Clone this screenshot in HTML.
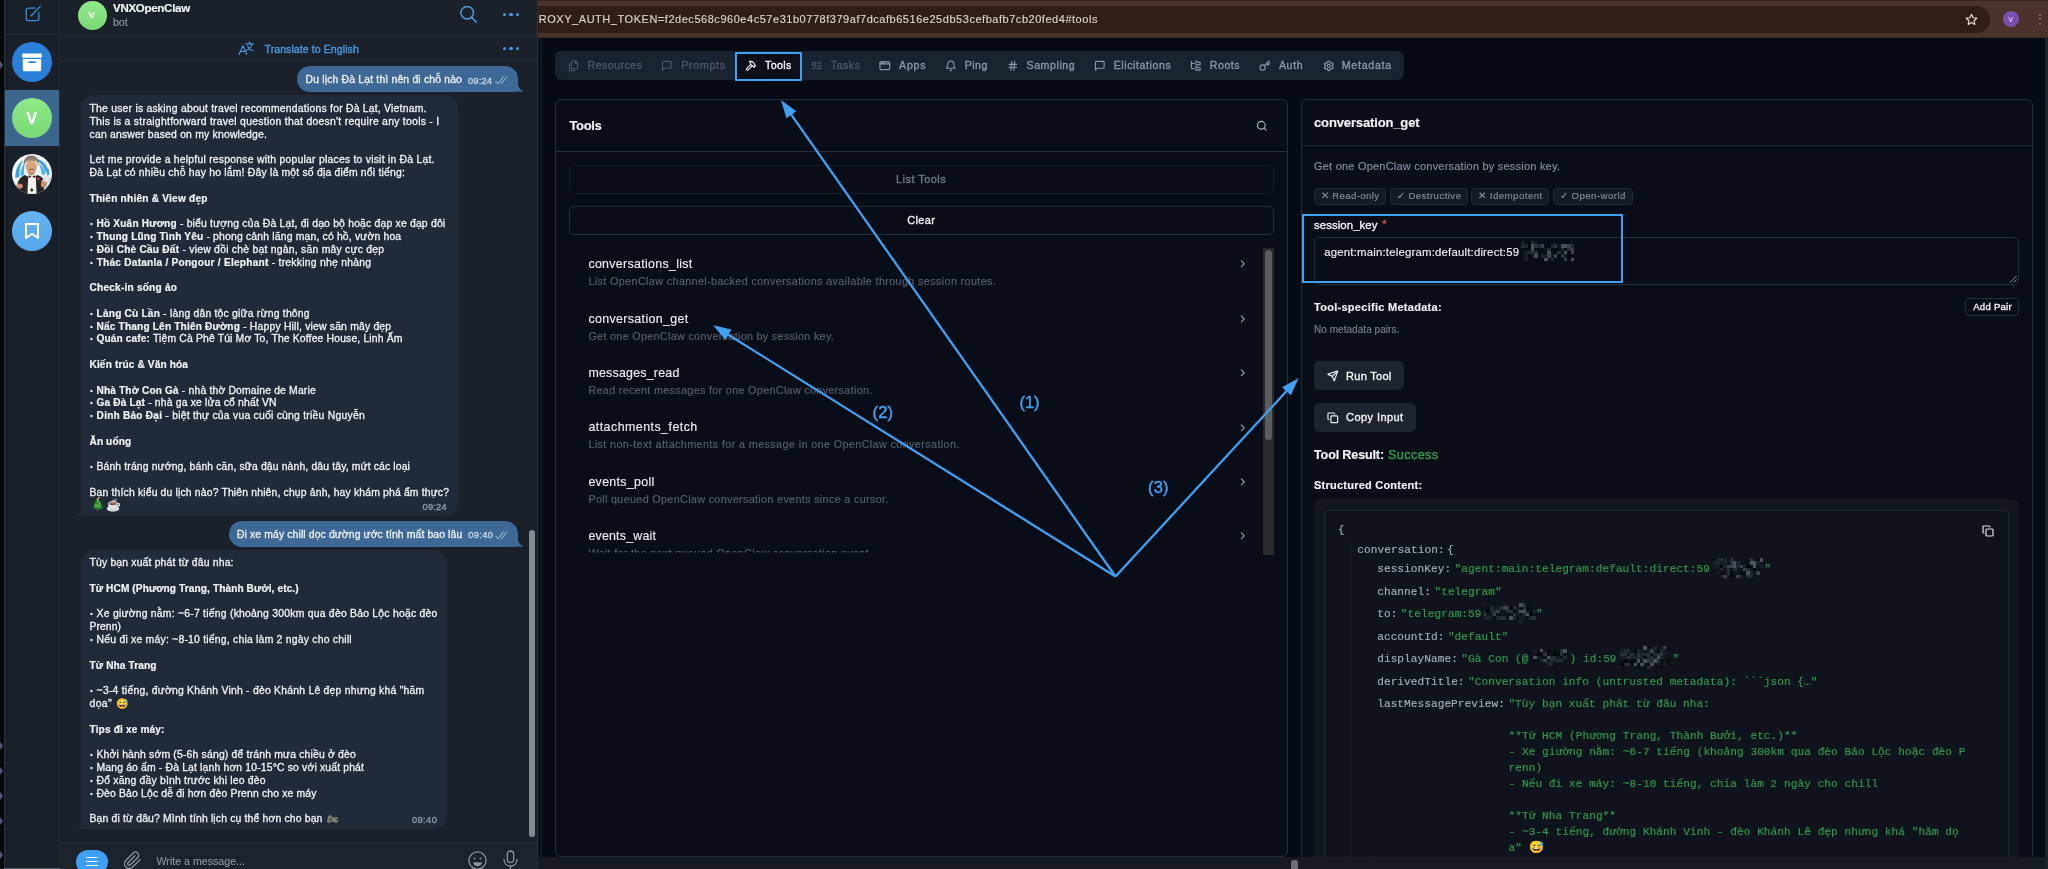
<!DOCTYPE html>
<html lang="vi"><head><meta charset="utf-8"><title>MCP Inspector</title>
<style>
html,body{margin:0;padding:0;background:#050a15;}
body{will-change:transform;width:2048px;height:869px;overflow:hidden;position:relative;font-family:'Liberation Sans',sans-serif;}
.a{position:absolute;box-sizing:border-box;}
.t{position:absolute;white-space:pre;-webkit-text-stroke:0.15px;}
svg{position:absolute;overflow:visible;}
b{font-weight:700;-webkit-text-stroke:0.2px;font-size:0.972em;}
.bl{font-style:normal;font-size:0.66em;vertical-align:0.16em;margin:0 0.1em 0 0.1em;}
</style></head>
<body>
<div class="a" style="left:0px;top:0px;width:538px;height:869px;background:#1a212b;"></div>
<div class="a" style="left:0px;top:0px;width:4px;height:869px;background:#07080a;"></div>
<div class="a" style="left:4px;top:0px;width:55px;height:869px;background:#19202a;"></div>
<div class="a" style="left:59px;top:0px;width:1px;height:869px;background:#222a35;"></div>
<div class="a" style="left:60px;top:33.5px;width:478px;height:1px;background:#222933;"></div>
<div class="a" style="left:4px;top:33.5px;width:55px;height:1px;background:#212934;"></div>
<div class="a" style="left:60px;top:61px;width:478px;height:1px;background:#222933;"></div>
<div class="a" style="left:4px;top:90px;width:55px;height:56px;background:#3d668f;"></div>
<svg style="left:24px;top:5px" width="18" height="18" viewBox="0 0 18 18" fill="none" stroke="#3d8bd8" stroke-width="1.3" stroke-linecap="round" stroke-linejoin="round"><path d="M11 3.2H4.2a2 2 0 0 0-2 2v8.4a2 2 0 0 0 2 2h8.6a2 2 0 0 0 2-2V7.4"/><path d="M16.3 1.4L7.2 10.8"/></svg>
<div class="a" style="left:12px;top:42px;width:40px;height:40px;border-radius:50%;background:#2a7fd8"></div>
<svg style="left:22px;top:52px" width="20" height="20" viewBox="0 0 20 20"><path d="M1.2 1.6h17.6a1 1 0 0 1 1 1v3.1H.2V2.6a1 1 0 0 1 1-1z" fill="#fff"/><path d="M.8 6.9h18.4v11a1.4 1.4 0 0 1-1.4 1.4H2.2A1.400 1.400 0 0 1 .8 17.900z" fill="#fff"/><rect x="6.400" y="9.200" width="7.200" height="1.900" rx=".6" fill="#2a7fd8"/></svg>
<div class="a" style="left:12px;top:98px;width:40px;height:40px;border-radius:50%;background:linear-gradient(180deg,#8fe98a,#77d873)"></div>
<svg style="left:12px;top:154px" width="40" height="40" viewBox="0 0 40 40"><defs><clipPath id="pc"><circle cx="20" cy="20" r="20"/></clipPath></defs><g clip-path="url(#pc)"><rect width="40" height="40" fill="#f1f6fa"/><path d="M3.500 24C3 16 6 9.500 11 6.500 8 12 7 18 7.500 23z" fill="#3ba3e0"/><path d="M8.500 22c0-6 2-11 5-14-1.500 5-2 9-1.500 13z" fill="#4db0ea"/><path d="M25 5c5 1 9.500 5 11.500 12l-3 1.500C32 13 29 9 25 7z" fill="#3ba3e0"/><path d="M27 10c3 2 5.500 5.500 6.500 10l-3.500 1c-.500-4-1.500-7.500-3-11z" fill="#4db0ea"/><path d="M36 14c1 2 1.500 4.500 1.500 7l-2.500.500c0-2.500-.300-4.500-1-6.500z" fill="#3ba3e0"/><path d="M11.800 12C11 5.500 14.500 1.500 19.500 1.500S27.500 5 26.600 12.500c-.600-3-1.600-5-2.600-6-2 1-6 1.200-9.500.500-1.200 1.500-2.200 3-2.700 5z" fill="#857a70"/><ellipse cx="19.300" cy="12.600" rx="5.600" ry="7" fill="#d9a680"/><path d="M14 8c2-1.500 8-1.800 10.600-.300L24 5.500h-9.500z" fill="#9a8f84"/><path d="M15.500 16.500c1.500 3 6 3 7.600 0-.400 3.500-1.800 5-3.800 5s-3.400-1.500-3.800-5z" fill="#b88a6a"/><path d="M16.800 14.800h5v1.200h-5z" fill="#8a6a55"/><path d="M4 40c.500-11 3-17 9-19l6.500 4 6-4c5 1.500 7 5 8 9l-3 10z" fill="#2a2322"/><path d="M16.200 22.500h7.600l.800 17.500h-9.200z" fill="#f4f2ef"/><path d="M16.500 21.200l3.300 1.800 3.300-1.800v2.800l-3.300-1.500-3.300 1.500z" fill="#1d1a1a"/><circle cx="26.500" cy="24.800" r="1.400" fill="#c8325e"/><path d="M29 27.500l5.500-5.800 5.500 1.800-5 7.500z" fill="#cfcfcf"/><path d="M31.500 26l4-4 3 1-3.500 5z" fill="#e6e6e6"/><circle cx="31.800" cy="30.500" r="3" fill="#c9906e"/><ellipse cx="7.600" cy="32" rx="3.200" ry="2.600" fill="#c9906e"/><path d="M19.800 33.500l1.800 3.500h-3.600z" fill="#2a2a2a"/><rect x="19.300" y="36" width="1" height="1.800" fill="#2a2a2a"/></g></svg>
<div class="a" style="left:12px;top:210.500px;width:40px;height:40px;border-radius:50%;background:linear-gradient(180deg,#66b4f3,#57a5ea)"></div>
<svg style="left:24px;top:222px" width="16" height="18" viewBox="0 0 16 18" fill="none" stroke="#fff" stroke-width="2" stroke-linejoin="round"><path d="M2 2h12v14l-6-4.200L2 16z"/></svg>
<div class="a" style="left:77.500px;top:0.500px;width:29px;height:29px;border-radius:50%;background:linear-gradient(180deg,#92ea8d,#78d974)"></div>
<svg style="left:458px;top:4px" width="22" height="22" viewBox="0 0 22 22" fill="none" stroke="#4a9ae2" stroke-width="1.500" stroke-linecap="round"><circle cx="9.200" cy="8.700" r="6.300"/><path d="M13.800 13.400L18.300 18.300"/></svg>
<div class="a" style="left:502.7px;top:12.5px;width:3.600px;height:3.600px;border-radius:50%;background:#4a9ae2"></div>
<div class="a" style="left:509.2px;top:12.5px;width:3.600px;height:3.600px;border-radius:50%;background:#4a9ae2"></div>
<div class="a" style="left:515.7px;top:12.5px;width:3.600px;height:3.600px;border-radius:50%;background:#4a9ae2"></div>
<div class="a" style="left:502.7px;top:46.900000000000006px;width:3.600px;height:3.600px;border-radius:50%;background:#4a9ae2"></div>
<div class="a" style="left:509.2px;top:46.900000000000006px;width:3.600px;height:3.600px;border-radius:50%;background:#4a9ae2"></div>
<div class="a" style="left:515.7px;top:46.900000000000006px;width:3.600px;height:3.600px;border-radius:50%;background:#4a9ae2"></div>
<svg style="left:237.500px;top:40.800px" width="16.200" height="14.400" viewBox="0 0 18 16" fill="none" stroke="#4a9ae2" stroke-width="1.200" stroke-linecap="round" stroke-linejoin="round"><path d="M1 15L5.600 5.200 9.800 15M2.600 11.600h5.800"/><path d="M8.600 3.200h8.400M12.600 1v2.200M15.400 3.400c-.8 3.400-3 5.800-6 7M10.600 5.600c1 2.400 3.200 4.400 6.200 5.200"/></svg>
<div class="a" style="left:296.500px;top:66px;width:221px;height:26px;border-radius:13px 13px 4px 13px;background:#3e6896"></div>
<svg style="left:511px;top:82px" width="13" height="10" viewBox="0 0 13 10"><path d="M0 0h6.500c0 4 2 7.500 6 9.400-3 .8-7 .6-9.500-1.200L0 10z" fill="#3e6896"/></svg>
<div class="a" style="left:81px;top:95px;width:377px;height:421.300px;border-radius:13px 13px 13px 4px;background:#202a39"></div>
<svg style="left:75px;top:506.300px" width="13" height="10" viewBox="0 0 13 10"><path d="M13 0H6.500c0 4-2 7.500-6 9.400 3 .8 7 .6 9.500-1.200L13 10z" fill="#202a39"/></svg>
<div class="a" style="left:228.500px;top:521px;width:289px;height:25.500px;border-radius:13px 13px 4px 13px;background:#3e6896"></div>
<svg style="left:511px;top:536.500px" width="13" height="10" viewBox="0 0 13 10"><path d="M0 0h6.500c0 4 2 7.500 6 9.400-3 .8-7 .6-9.500-1.200L0 10z" fill="#3e6896"/></svg>
<div class="a" style="left:81px;top:549.500px;width:365.500px;height:279.500px;border-radius:13px 13px 13px 4px;background:#202a39"></div>
<svg style="left:75px;top:819px" width="13" height="10" viewBox="0 0 13 10"><path d="M13 0H6.500c0 4-2 7.500-6 9.400 3 .8 7 .6 9.500-1.200L13 10z" fill="#202a39"/></svg>
<svg style="left:494.500px;top:76.0px" width="14" height="9" viewBox="0 0 14 9" fill="none" stroke="#b4cde8" stroke-width="1" stroke-linecap="round" stroke-linejoin="round"><path d="M.8 5.200l2.200 2.600L8.400.9M6.200 7.800L11.800.9"/></svg>
<svg style="left:494.500px;top:530.5px" width="14" height="9" viewBox="0 0 14 9" fill="none" stroke="#b4cde8" stroke-width="1" stroke-linecap="round" stroke-linejoin="round"><path d="M.8 5.200l2.200 2.600L8.400.9M6.200 7.800L11.800.9"/></svg>
<div class="a" style="left:4px;top:868px;width:533px;height:1px;background:#5a6068;"></div>
<div class="a" style="left:4px;top:0px;width:0.8px;height:868px;background:#2a313b;"></div>
<svg style="left:0;top:61px" width="4" height="8" viewBox="0 0 4 8"><path d="M0 0L3.200 4L0 8z" fill="#55557a"/></svg>
<svg style="left:0;top:742px" width="4" height="8" viewBox="0 0 4 8"><path d="M0 0L3.200 4L0 8z" fill="#55557a"/></svg>
<svg style="left:0;top:767px" width="4" height="8" viewBox="0 0 4 8"><path d="M0 0L3.200 4L0 8z" fill="#55557a"/></svg>
<svg style="left:0;top:792px" width="4" height="8" viewBox="0 0 4 8"><path d="M0 0L3.200 4L0 8z" fill="#55557a"/></svg>
<svg style="left:0;top:817px" width="4" height="8" viewBox="0 0 4 8"><path d="M0 0L3.200 4L0 8z" fill="#55557a"/></svg>
<svg style="left:0;top:851px" width="4" height="8" viewBox="0 0 4 8"><path d="M0 0L3.200 4L0 8z" fill="#55557a"/></svg>
<div class="a" style="left:529px;top:530px;width:6px;height:307px;background:#848a91;border-radius:3px;"></div>
<div class="a" style="left:60px;top:841.5px;width:478px;height:1px;background:#262e39;"></div>
<div class="a" style="left:60px;top:842.5px;width:478px;height:27px;background:#1b222c;"></div>
<div class="a" style="left:76px;top:849.500px;width:32px;height:24px;border-radius:12px;background:#3ea0f4"></div>
<div class="a" style="left:86px;top:856.5px;width:12px;height:1.6px;background:#fff;border-radius:0.8px;"></div>
<div class="a" style="left:86px;top:860.5px;width:12px;height:1.6px;background:#fff;border-radius:0.8px;"></div>
<div class="a" style="left:86px;top:864.5px;width:12px;height:1.6px;background:#fff;border-radius:0.8px;"></div>
<svg style="left:123px;top:851px" width="19" height="19" viewBox="0 0 24 24" fill="none" stroke="#8b939d" stroke-width="1.700" stroke-linecap="round" stroke-linejoin="round"><path d="M21.400 11.050l-9.190 9.190a6 6 0 0 1-8.490-8.490l9.190-9.190a4 4 0 0 1 5.660 5.660l-9.200 9.190a2 2 0 0 1-2.830-2.830l8.490-8.480"/></svg>
<svg style="left:468px;top:851px" width="19" height="19" viewBox="0 0 19 19" fill="none" stroke="#8b939d" stroke-width="1.300"><circle cx="9.500" cy="9.500" r="8.600"/><circle cx="6.500" cy="7.600" r="1" fill="#8b939d" stroke="none"/><circle cx="12.500" cy="7.600" r="1" fill="#8b939d" stroke="none"/><path d="M5 11.200h9c-.4 2.600-2.200 4-4.500 4s-4.100-1.400-4.500-4z" fill="#8b939d" stroke="none"/></svg>
<svg style="left:502px;top:850px" width="17" height="20" viewBox="0 0 17 20" fill="none" stroke="#8b939d" stroke-width="1.300" stroke-linecap="round"><rect x="5.300" y="1" width="6.400" height="11.500" rx="3.200"/><path d="M2 9.500c0 4 2.800 6.500 6.500 6.500s6.500-2.500 6.500-6.500M8.500 16v4"/></svg>
<span class="t" style="left:113px;top:0px;line-height:17px;font-size:11.5px;color:#f4f6f8;font-weight:700;letter-spacing:-0.275px;">VNXOpenClaw</span>
<span class="t" style="left:113px;top:14px;line-height:16px;font-size:10.5px;color:#8d98a4;">bot</span>
<span class="t" style="left:88.3px;top:8px;line-height:14px;font-size:9.5px;color:#fff;font-weight:700;">V</span>
<span class="t" style="left:26.3px;top:107px;line-height:23px;font-size:16.5px;color:#fff;font-weight:700;">V</span>
<span class="t" style="left:264.5px;top:41px;line-height:16px;font-size:10.6px;color:#4a9ae2;-webkit-text-stroke:0.35px;letter-spacing:0.055px;">Translate to English</span>
<span class="t" style="left:305.6px;top:72px;line-height:16px;font-size:10.4px;color:#f1f3f5;letter-spacing:0.173px;-webkit-text-stroke:0.3px #f1f3f5;">Du lịch Đà Lạt thì nên đi chỗ nào</span>
<span class="t" style="left:468px;top:74px;line-height:14px;font-size:9.3px;color:#c2d6ec;-webkit-text-stroke:0.35px;letter-spacing:0.163px;">09:24</span>
<span class="t" style="left:89.5px;top:101px;line-height:16px;font-size:10.4px;color:#f1f3f5;letter-spacing:0.222px;-webkit-text-stroke:0.3px #f1f3f5;">The user is asking about travel recommendations for Đà Lạt, Vietnam.</span>
<span class="t" style="left:89.5px;top:114px;line-height:16px;font-size:10.4px;color:#f1f3f5;letter-spacing:0.277px;-webkit-text-stroke:0.3px #f1f3f5;">This is a straightforward travel question that doesn't require any tools - I</span>
<span class="t" style="left:89.5px;top:127px;line-height:16px;font-size:10.4px;color:#f1f3f5;letter-spacing:0.201px;-webkit-text-stroke:0.3px #f1f3f5;">can answer based on my knowledge.</span>
<span class="t" style="left:89.5px;top:152px;line-height:16px;font-size:10.4px;color:#f1f3f5;letter-spacing:0.235px;-webkit-text-stroke:0.3px #f1f3f5;">Let me provide a helpful response with popular places to visit in Đà Lạt.</span>
<span class="t" style="left:89.5px;top:165px;line-height:16px;font-size:10.4px;color:#f1f3f5;letter-spacing:0.198px;-webkit-text-stroke:0.3px #f1f3f5;">Đà Lạt có nhiều chỗ hay ho lắm! Đây là một số địa điểm nổi tiếng:</span>
<span class="t" style="left:89.5px;top:191px;line-height:16px;font-size:10.4px;color:#f1f3f5;letter-spacing:0.232px;-webkit-text-stroke:0.3px #f1f3f5;"><b>Thiên nhiên &amp; View đẹp</b></span>
<span class="t" style="left:89.5px;top:216px;line-height:16px;font-size:10.4px;color:#f1f3f5;letter-spacing:0.189px;-webkit-text-stroke:0.3px #f1f3f5;"><i class="bl">•</i> <b>Hồ Xuân Hương</b> - biểu tượng của Đà Lạt, đi dạo bộ hoặc đạp xe đạp đôi</span>
<span class="t" style="left:89.5px;top:229px;line-height:16px;font-size:10.4px;color:#f1f3f5;letter-spacing:0.175px;-webkit-text-stroke:0.3px #f1f3f5;"><i class="bl">•</i> <b>Thung Lũng Tình Yêu</b> - phong cảnh lãng mạn, có hồ, vườn hoa</span>
<span class="t" style="left:89.5px;top:242px;line-height:16px;font-size:10.4px;color:#f1f3f5;letter-spacing:0.239px;-webkit-text-stroke:0.3px #f1f3f5;"><i class="bl">•</i> <b>Đồi Chè Cầu Đất</b> - view đồi chè bạt ngàn, săn mây cực đẹp</span>
<span class="t" style="left:89.5px;top:255px;line-height:16px;font-size:10.4px;color:#f1f3f5;letter-spacing:0.246px;-webkit-text-stroke:0.3px #f1f3f5;"><i class="bl">•</i> <b>Thác Datanla / Pongour / Elephant</b> - trekking nhẹ nhàng</span>
<span class="t" style="left:89.5px;top:280px;line-height:16px;font-size:10.4px;color:#f1f3f5;letter-spacing:0.217px;-webkit-text-stroke:0.3px #f1f3f5;"><b>Check-in sống ảo</b></span>
<span class="t" style="left:89.5px;top:306px;line-height:16px;font-size:10.4px;color:#f1f3f5;letter-spacing:0.210px;-webkit-text-stroke:0.3px #f1f3f5;"><i class="bl">•</i> <b>Làng Cù Lần</b> - làng dân tộc giữa rừng thông</span>
<span class="t" style="left:89.5px;top:319px;line-height:16px;font-size:10.4px;color:#f1f3f5;letter-spacing:0.183px;-webkit-text-stroke:0.3px #f1f3f5;"><i class="bl">•</i> <b>Nấc Thang Lên Thiên Đường</b> - Happy Hill, view săn mây đẹp</span>
<span class="t" style="left:89.5px;top:331px;line-height:16px;font-size:10.4px;color:#f1f3f5;letter-spacing:0.149px;-webkit-text-stroke:0.3px #f1f3f5;"><i class="bl">•</i> <b>Quán cafe:</b> Tiệm Cà Phê Túi Mơ To, The Koffee House, Linh Ấm</span>
<span class="t" style="left:89.5px;top:357px;line-height:16px;font-size:10.4px;color:#f1f3f5;letter-spacing:0.140px;-webkit-text-stroke:0.3px #f1f3f5;"><b>Kiến trúc &amp; Văn hóa</b></span>
<span class="t" style="left:89.5px;top:383px;line-height:16px;font-size:10.4px;color:#f1f3f5;letter-spacing:0.161px;-webkit-text-stroke:0.3px #f1f3f5;"><i class="bl">•</i> <b>Nhà Thờ Con Gà</b> - nhà thờ Domaine de Marie</span>
<span class="t" style="left:89.5px;top:395px;line-height:16px;font-size:10.4px;color:#f1f3f5;letter-spacing:0.169px;-webkit-text-stroke:0.3px #f1f3f5;"><i class="bl">•</i> <b>Ga Đà Lạt</b> - nhà ga xe lửa cổ nhất VN</span>
<span class="t" style="left:89.5px;top:408px;line-height:16px;font-size:10.4px;color:#f1f3f5;letter-spacing:0.232px;-webkit-text-stroke:0.3px #f1f3f5;"><i class="bl">•</i> <b>Dinh Bảo Đại</b> - biệt thự của vua cuối cùng triều Nguyễn</span>
<span class="t" style="left:89.5px;top:434px;line-height:16px;font-size:10.4px;color:#f1f3f5;letter-spacing:0.117px;-webkit-text-stroke:0.3px #f1f3f5;"><b>Ăn uống</b></span>
<span class="t" style="left:89.5px;top:459px;line-height:16px;font-size:10.4px;color:#f1f3f5;letter-spacing:0.141px;-webkit-text-stroke:0.3px #f1f3f5;"><i class="bl">•</i> Bánh tráng nướng, bánh căn, sữa đậu nành, dâu tây, mứt các loại</span>
<span class="t" style="left:89.5px;top:485px;line-height:16px;font-size:10.4px;color:#f1f3f5;letter-spacing:0.159px;-webkit-text-stroke:0.3px #f1f3f5;">Bạn thích kiểu du lịch nào? Thiên nhiên, chụp ảnh, hay khám phá ẩm thực?</span>
<span class="t" style="left:422.6px;top:500px;line-height:14px;font-size:9.3px;color:#8f9aa8;-webkit-text-stroke:0.35px;letter-spacing:0.163px;">09:24</span>
<span class="t" style="left:91px;top:496px;line-height:16px;font-size:11px;color:#2f8f4e;">🎄</span>
<span class="t" style="left:105.5px;top:496px;line-height:18px;font-size:12px;color:#c9b9a6;">☕</span>
<span class="t" style="left:237px;top:527px;line-height:16px;font-size:10.4px;color:#f1f3f5;letter-spacing:0.119px;-webkit-text-stroke:0.3px #f1f3f5;">Đi xe máy chill dọc đường ước tính mất bao lâu</span>
<span class="t" style="left:468.3px;top:528px;line-height:14px;font-size:9.3px;color:#c2d6ec;-webkit-text-stroke:0.35px;letter-spacing:0.319px;">09:40</span>
<span class="t" style="left:89.5px;top:555px;line-height:16px;font-size:10.4px;color:#f1f3f5;letter-spacing:0.170px;-webkit-text-stroke:0.3px #f1f3f5;">Tùy bạn xuất phát từ đâu nha:</span>
<span class="t" style="left:89.5px;top:581px;line-height:16px;font-size:10.4px;color:#f1f3f5;letter-spacing:0.107px;-webkit-text-stroke:0.3px #f1f3f5;"><b>Từ HCM (Phương Trang, Thành Bưởi, etc.)</b></span>
<span class="t" style="left:89.5px;top:606px;line-height:16px;font-size:10.4px;color:#f1f3f5;letter-spacing:0.233px;-webkit-text-stroke:0.3px #f1f3f5;"><i class="bl">•</i> Xe giường nằm: ~6-7 tiếng (khoảng 300km qua đèo Bảo Lộc hoặc đèo</span>
<span class="t" style="left:89.5px;top:619px;line-height:16px;font-size:10.4px;color:#f1f3f5;letter-spacing:0.057px;-webkit-text-stroke:0.3px #f1f3f5;">Prenn)</span>
<span class="t" style="left:89.5px;top:632px;line-height:16px;font-size:10.4px;color:#f1f3f5;letter-spacing:0.222px;-webkit-text-stroke:0.3px #f1f3f5;"><i class="bl">•</i> Nếu đi xe máy: ~8-10 tiếng, chia làm 2 ngày cho chill</span>
<span class="t" style="left:89.5px;top:658px;line-height:16px;font-size:10.4px;color:#f1f3f5;letter-spacing:0.127px;-webkit-text-stroke:0.3px #f1f3f5;"><b>Từ Nha Trang</b></span>
<span class="t" style="left:89.5px;top:683px;line-height:16px;font-size:10.4px;color:#f1f3f5;letter-spacing:0.234px;-webkit-text-stroke:0.3px #f1f3f5;"><i class="bl">•</i> ~3-4 tiếng, đường Khánh Vinh - đèo Khánh Lê đẹp nhưng khá "hăm</span>
<span class="t" style="left:89.5px;top:696px;line-height:16px;font-size:10.4px;color:#f1f3f5;letter-spacing:0.391px;-webkit-text-stroke:0.3px #f1f3f5;">dọa"</span>
<span class="t" style="left:89.5px;top:722px;line-height:16px;font-size:10.4px;color:#f1f3f5;letter-spacing:0.155px;-webkit-text-stroke:0.3px #f1f3f5;"><b>Tips đi xe máy:</b></span>
<span class="t" style="left:89.5px;top:747px;line-height:16px;font-size:10.4px;color:#f1f3f5;letter-spacing:0.183px;-webkit-text-stroke:0.3px #f1f3f5;"><i class="bl">•</i> Khởi hành sớm (5-6h sáng) để tránh mưa chiều ở đèo</span>
<span class="t" style="left:89.5px;top:760px;line-height:16px;font-size:10.4px;color:#f1f3f5;letter-spacing:0.159px;-webkit-text-stroke:0.3px #f1f3f5;"><i class="bl">•</i> Mang áo ấm - Đà Lạt lạnh hơn 10-15°C so với xuất phát</span>
<span class="t" style="left:89.5px;top:773px;line-height:16px;font-size:10.4px;color:#f1f3f5;letter-spacing:0.190px;-webkit-text-stroke:0.3px #f1f3f5;"><i class="bl">•</i> Đổ xăng đầy bình trước khi leo đèo</span>
<span class="t" style="left:89.5px;top:786px;line-height:16px;font-size:10.4px;color:#f1f3f5;letter-spacing:0.157px;-webkit-text-stroke:0.3px #f1f3f5;"><i class="bl">•</i> Đèo Bảo Lộc dễ đi hơn đèo Prenn cho xe máy</span>
<span class="t" style="left:89.5px;top:811px;line-height:16px;font-size:10.4px;color:#f1f3f5;letter-spacing:0.164px;-webkit-text-stroke:0.3px #f1f3f5;">Bạn đi từ đâu? Mình tính lịch cụ thể hơn cho bạn</span>
<span class="t" style="left:412px;top:813px;line-height:14px;font-size:9.3px;color:#8f9aa8;-webkit-text-stroke:0.35px;letter-spacing:0.385px;">09:40</span>
<span class="t" style="left:115.5px;top:696px;line-height:15px;font-size:10px;color:#e8b43a;">😅</span>
<span class="t" style="left:326.5px;top:812px;line-height:14px;font-size:9px;color:#8a8f7a;">🏍</span>
<span class="t" style="left:156.5px;top:853px;line-height:16px;font-size:10.6px;color:#8b939d;letter-spacing:0.021px;">Write a message...</span>
<div class="a" style="left:538px;top:0px;width:1510px;height:869px;background:#050a15;"></div>
<div class="a" style="left:555.3px;top:51.2px;width:849px;height:29px;background:#19222f;border-radius:6px;"></div>
<div class="a" style="left:734.5px;top:51.5px;width:67px;height:29px;background:#0a0f1a;border:2px solid #40a0f3;border-radius:1px;"></div>
<svg style="left:567.6px;top:60px" width="11.6" height="11.6" viewBox="0 0 24 24" fill="none" stroke="#4b5668" stroke-width="2.4" stroke-linecap="round" stroke-linejoin="round"><path d="M20 7h-3a2 2 0 0 1-2-2V2"/><path d="M9 18a2 2 0 0 1-2-2V4a2 2 0 0 1 2-2h7l4 4v10a2 2 0 0 1-2 2Z"/><path d="M3 7.600v12.800A1.600 1.600 0 0 0 4.600 22h9.800"/></svg>
<span class="t" style="left:587.5px;top:57px;line-height:16px;font-size:10.6px;color:#4b5668;-webkit-text-stroke:0.35px;letter-spacing:0.489px;">Resources</span>
<svg style="left:661px;top:60px" width="11.6" height="11.6" viewBox="0 0 24 24" fill="none" stroke="#4b5668" stroke-width="2.4" stroke-linecap="round" stroke-linejoin="round"><path d="M21 15a2 2 0 0 1-2 2H7l-4 4V5a2 2 0 0 1 2-2h14a2 2 0 0 1 2 2z"/></svg>
<span class="t" style="left:681.3px;top:57px;line-height:16px;font-size:10.6px;color:#4b5668;-webkit-text-stroke:0.35px;letter-spacing:0.700px;">Prompts</span>
<svg style="left:744.6px;top:60px" width="11.6" height="11.6" viewBox="0 0 24 24" fill="none" stroke="#f3f5f8" stroke-width="2.4" stroke-linecap="round" stroke-linejoin="round"><path d="m15 12-8.373 8.373a1 1 0 1 1-3-3L12 9"/><path d="m18 15 4-4"/><path d="m21.500 11.500-1.914-1.914A2 2 0 0 1 19 8.172V7l-2.260-2.260a6 6 0 0 0-4.202-1.756L9 2.960l.920.820A6.180 6.180 0 0 1 12 8.400V10l2 2h1.172a2 2 0 0 1 1.414.586L18.500 14.500"/></svg>
<span class="t" style="left:765px;top:57px;line-height:16px;font-size:10.6px;color:#f3f5f8;-webkit-text-stroke:0.35px;letter-spacing:0.392px;">Tools</span>
<svg style="left:811.2px;top:60px" width="11.6" height="11.6" viewBox="0 0 24 24" fill="none" stroke="#4b5668" stroke-width="2.4" stroke-linecap="round" stroke-linejoin="round"><rect x="3" y="5" width="6" height="6" rx="1"/><path d="m3 17 2 2 4-4"/><path d="M13 6h8"/><path d="M13 12h8"/><path d="M13 18h8"/></svg>
<span class="t" style="left:830.7px;top:57px;line-height:16px;font-size:10.6px;color:#4b5668;-webkit-text-stroke:0.35px;letter-spacing:0.557px;">Tasks</span>
<svg style="left:879px;top:60px" width="11.6" height="11.6" viewBox="0 0 24 24" fill="none" stroke="#8b96a9" stroke-width="2.4" stroke-linecap="round" stroke-linejoin="round"><rect x="2" y="4" width="20" height="16" rx="2"/><path d="M10 4v4"/><path d="M2 8h20"/><path d="M6 4v4"/></svg>
<span class="t" style="left:899px;top:57px;line-height:16px;font-size:10.6px;color:#8b96a9;-webkit-text-stroke:0.35px;letter-spacing:0.812px;">Apps</span>
<svg style="left:944.6px;top:60px" width="11.6" height="11.6" viewBox="0 0 24 24" fill="none" stroke="#8b96a9" stroke-width="2.4" stroke-linecap="round" stroke-linejoin="round"><path d="M6 8a6 6 0 0 1 12 0c0 7 3 9 3 9H3s3-2 3-9"/><path d="M10.300 21a1.940 1.940 0 0 0 3.400 0"/></svg>
<span class="t" style="left:964.8px;top:57px;line-height:16px;font-size:10.6px;color:#8b96a9;-webkit-text-stroke:0.35px;letter-spacing:0.428px;">Ping</span>
<svg style="left:1007.3px;top:60px" width="11.6" height="11.6" viewBox="0 0 24 24" fill="none" stroke="#8b96a9" stroke-width="2.4" stroke-linecap="round" stroke-linejoin="round"><path d="M4 9h16M4 15h16M10 3L8 21M16 3l-2 18"/></svg>
<span class="t" style="left:1026.5px;top:57px;line-height:16px;font-size:10.6px;color:#8b96a9;-webkit-text-stroke:0.35px;letter-spacing:0.577px;">Sampling</span>
<svg style="left:1094px;top:60px" width="11.6" height="11.6" viewBox="0 0 24 24" fill="none" stroke="#8b96a9" stroke-width="2.4" stroke-linecap="round" stroke-linejoin="round"><path d="M21 15a2 2 0 0 1-2 2H7l-4 4V5a2 2 0 0 1 2-2h14a2 2 0 0 1 2 2z"/></svg>
<span class="t" style="left:1113.7px;top:57px;line-height:16px;font-size:10.6px;color:#8b96a9;-webkit-text-stroke:0.35px;letter-spacing:0.579px;">Elicitations</span>
<svg style="left:1190px;top:60px" width="11.6" height="11.6" viewBox="0 0 24 24" fill="none" stroke="#8b96a9" stroke-width="2.4" stroke-linecap="round" stroke-linejoin="round"><path d="M20 10a1 1 0 0 0 1-1V6a1 1 0 0 0-1-1h-2.500a1 1 0 0 1-.800-.400l-.900-1.200A1 1 0 0 0 15 3h-2a1 1 0 0 0-1 1v5a1 1 0 0 0 1 1Z"/><path d="M20 21a1 1 0 0 0 1-1v-3a1 1 0 0 0-1-1h-2.900a1 1 0 0 1-.880-.550l-.420-.850a1 1 0 0 0-.920-.600H13a1 1 0 0 0-1 1v5a1 1 0 0 0 1 1Z"/><path d="M3 5a2 2 0 0 0 2 2h3"/><path d="M3 3v13a2 2 0 0 0 2 2h3"/></svg>
<span class="t" style="left:1209.8px;top:57px;line-height:16px;font-size:10.6px;color:#8b96a9;-webkit-text-stroke:0.35px;letter-spacing:0.536px;">Roots</span>
<svg style="left:1259px;top:60px" width="11.6" height="11.6" viewBox="0 0 24 24" fill="none" stroke="#8b96a9" stroke-width="2.4" stroke-linecap="round" stroke-linejoin="round"><path d="m15.500 7.500 2.300 2.300a1 1 0 0 0 1.400 0l2.100-2.100a1 1 0 0 0 0-1.400L19 4"/><path d="m21 2-9.600 9.600"/><circle cx="7.500" cy="15.500" r="5.500"/></svg>
<span class="t" style="left:1278.9px;top:57px;line-height:16px;font-size:10.6px;color:#8b96a9;-webkit-text-stroke:0.35px;letter-spacing:0.658px;">Auth</span>
<svg style="left:1322.5px;top:60px" width="11.6" height="11.6" viewBox="0 0 24 24" fill="none" stroke="#8b96a9" stroke-width="2.4" stroke-linecap="round" stroke-linejoin="round"><path d="M12.220 2h-.440a2 2 0 0 0-2 2v.180a2 2 0 0 1-1 1.730l-.430.250a2 2 0 0 1-2 0l-.150-.080a2 2 0 0 0-2.730.730l-.220.380a2 2 0 0 0 .730 2.730l.150.100a2 2 0 0 1 1 1.720v.510a2 2 0 0 1-1 1.740l-.150.090a2 2 0 0 0-.730 2.730l.220.380a2 2 0 0 0 2.730.730l.150-.080a2 2 0 0 1 2 0l.430.250a2 2 0 0 1 1 1.730V20a2 2 0 0 0 2 2h.440a2 2 0 0 0 2-2v-.180a2 2 0 0 1 1-1.730l.430-.250a2 2 0 0 1 2 0l.150.080a2 2 0 0 0 2.730-.730l.220-.390a2 2 0 0 0-.730-2.730l-.150-.080a2 2 0 0 1-1-1.740v-.500a2 2 0 0 1 1-1.740l.150-.090a2 2 0 0 0 .730-2.730l-.220-.380a2 2 0 0 0-2.730-.730l-.150.080a2 2 0 0 1-2 0l-.430-.250a2 2 0 0 1-1-1.730V4a2 2 0 0 0-2-2z"/><circle cx="12" cy="12" r="3"/></svg>
<span class="t" style="left:1341.8px;top:57px;line-height:16px;font-size:10.6px;color:#8b96a9;-webkit-text-stroke:0.35px;letter-spacing:0.737px;">Metadata</span>
<div class="a" style="left:555px;top:99px;width:733px;height:758px;background:#080d18;border:1px solid #242d3a;border-radius:6px;"></div>
<div class="a" style="left:556px;top:151px;width:731px;height:1px;background:#242d3a;"></div>
<span class="t" style="left:569.5px;top:116px;line-height:19px;font-size:13px;color:#f3f5f8;font-weight:700;letter-spacing:-0.378px;">Tools</span>
<svg style="left:1255.5px;top:119.8px" width="11.6" height="11.6" viewBox="0 0 24 24" fill="none" stroke="#a9b2c0" stroke-width="2.4" stroke-linecap="round" stroke-linejoin="round"><circle cx="11" cy="11" r="8"/><path d="m21 21-4.300-4.300"/></svg>
<div class="a" style="left:568.7px;top:165.3px;width:705.7px;height:28.5px;border:1px solid #151d29;border-radius:5px;"></div>
<span class="t" style="left:896px;top:171px;line-height:16px;font-size:11px;color:#6f7886;-webkit-text-stroke:0.35px;letter-spacing:0.457px;">List Tools</span>
<div class="a" style="left:568.7px;top:206px;width:705.7px;height:29px;border:1px solid #242d3a;border-radius:5px;"></div>
<span class="t" style="left:907.2px;top:212px;line-height:16px;font-size:11px;color:#eef1f4;-webkit-text-stroke:0.35px;letter-spacing:0.378px;">Clear</span>
<span class="t" style="left:588.4px;top:255px;line-height:18px;font-size:12.4px;color:#e9ecf0;letter-spacing:0.315px;">conversations_list</span>
<span class="t" style="left:588.4px;top:273px;line-height:16px;font-size:10.8px;color:#566070;letter-spacing:0.367px;">List OpenClaw channel-backed conversations available through session routes.</span>
<svg style="left:1237.2px;top:258.4px" width="11.6" height="11.6" viewBox="0 0 24 24" fill="none" stroke="#9aa3b1" stroke-width="2.4" stroke-linecap="round" stroke-linejoin="round"><path d="m9 18 6-6-6-6"/></svg>
<span class="t" style="left:588.4px;top:310px;line-height:18px;font-size:12.4px;color:#e9ecf0;letter-spacing:0.369px;">conversation_get</span>
<span class="t" style="left:588.4px;top:328px;line-height:16px;font-size:10.8px;color:#566070;letter-spacing:0.304px;">Get one OpenClaw conversation by session key.</span>
<svg style="left:1237.2px;top:312.8px" width="11.6" height="11.6" viewBox="0 0 24 24" fill="none" stroke="#9aa3b1" stroke-width="2.4" stroke-linecap="round" stroke-linejoin="round"><path d="m9 18 6-6-6-6"/></svg>
<span class="t" style="left:588.4px;top:364px;line-height:18px;font-size:12.4px;color:#e9ecf0;letter-spacing:0.234px;">messages_read</span>
<span class="t" style="left:588.4px;top:382px;line-height:16px;font-size:10.8px;color:#566070;letter-spacing:0.313px;">Read recent messages for one OpenClaw conversation.</span>
<svg style="left:1237.2px;top:367.2px" width="11.6" height="11.6" viewBox="0 0 24 24" fill="none" stroke="#9aa3b1" stroke-width="2.4" stroke-linecap="round" stroke-linejoin="round"><path d="m9 18 6-6-6-6"/></svg>
<span class="t" style="left:588.4px;top:418px;line-height:18px;font-size:12.4px;color:#e9ecf0;letter-spacing:0.476px;">attachments_fetch</span>
<span class="t" style="left:588.4px;top:436px;line-height:16px;font-size:10.8px;color:#566070;letter-spacing:0.380px;">List non-text attachments for a message in one OpenClaw conversation.</span>
<svg style="left:1237.2px;top:421.59999999999997px" width="11.6" height="11.6" viewBox="0 0 24 24" fill="none" stroke="#9aa3b1" stroke-width="2.4" stroke-linecap="round" stroke-linejoin="round"><path d="m9 18 6-6-6-6"/></svg>
<span class="t" style="left:588.4px;top:473px;line-height:18px;font-size:12.4px;color:#e9ecf0;letter-spacing:0.325px;">events_poll</span>
<span class="t" style="left:588.4px;top:491px;line-height:16px;font-size:10.8px;color:#566070;letter-spacing:0.324px;">Poll queued OpenClaw conversation events since a cursor.</span>
<svg style="left:1237.2px;top:476.0px" width="11.6" height="11.6" viewBox="0 0 24 24" fill="none" stroke="#9aa3b1" stroke-width="2.4" stroke-linecap="round" stroke-linejoin="round"><path d="m9 18 6-6-6-6"/></svg>
<span class="t" style="left:588.4px;top:527px;line-height:18px;font-size:12.4px;color:#e9ecf0;letter-spacing:0.206px;">events_wait</span>
<span class="t" style="left:588.4px;top:545px;line-height:16px;font-size:10.8px;color:#566070;letter-spacing:0.311px;clip-path:inset(0 0 8.500px 0);">Wait for the next queued OpenClaw conversation event.</span>
<svg style="left:1237.2px;top:530.4000000000001px" width="11.6" height="11.6" viewBox="0 0 24 24" fill="none" stroke="#9aa3b1" stroke-width="2.4" stroke-linecap="round" stroke-linejoin="round"><path d="m9 18 6-6-6-6"/></svg>
<div class="a" style="left:1263px;top:248px;width:11.4px;height:307px;background:#2a2a2c;"></div>
<div class="a" style="left:1265.2px;top:250px;width:7px;height:190px;background:#5c5c5f;border-radius:3.5px;"></div>
<div class="a" style="left:1301.4px;top:99px;width:731.6px;height:775px;background:#080d18;border:1px solid #242d3a;border-radius:6px;"></div>
<div class="a" style="left:1302.4px;top:145px;width:729.6px;height:1px;background:#242d3a;"></div>
<span class="t" style="left:1314px;top:113px;line-height:19px;font-size:13px;color:#f3f5f8;font-weight:700;letter-spacing:-0.139px;">conversation_get</span>
<span class="t" style="left:1314px;top:158px;line-height:16px;font-size:11px;color:#8690a0;letter-spacing:0.215px;">Get one OpenClaw conversation by session key.</span>
<div class="a" style="left:1314px;top:187.5px;width:72px;height:17px;background:#141b27;border:1px solid #212a38;border-radius:3.5px;"></div>
<span class="t" style="left:1320.8px;top:189px;line-height:14px;font-size:9.6px;color:#828c9b;letter-spacing:0.380px;">✕ Read-only</span>
<div class="a" style="left:1390px;top:187.5px;width:78px;height:17px;background:#141b27;border:1px solid #212a38;border-radius:3.5px;"></div>
<span class="t" style="left:1396.8px;top:189px;line-height:14px;font-size:9.6px;color:#828c9b;letter-spacing:0.460px;">✓ Destructive</span>
<div class="a" style="left:1471.3px;top:187.5px;width:78.0px;height:17px;background:#141b27;border:1px solid #212a38;border-radius:3.5px;"></div>
<span class="t" style="left:1478.1px;top:189px;line-height:14px;font-size:9.6px;color:#828c9b;letter-spacing:0.498px;">✕ Idempotent</span>
<div class="a" style="left:1553px;top:187.5px;width:79.5px;height:17px;background:#141b27;border:1px solid #212a38;border-radius:3.5px;"></div>
<span class="t" style="left:1559.8px;top:189px;line-height:14px;font-size:9.6px;color:#828c9b;letter-spacing:0.490px;">✓ Open-world</span>
<div class="a" style="left:1314px;top:237px;width:704.6px;height:47.5px;border:1px solid #242d3a;border-radius:5px;"></div>
<svg style="left:2009px;top:274.500px" width="8" height="8" viewBox="0 0 8 8" stroke="#8a93a1" stroke-width="1" fill="none"><path d="M7.500 1L1 7.500M7.500 4.500L4.500 7.500"/></svg>
<span class="t" style="left:1314px;top:217px;line-height:17px;font-size:11.4px;color:#eef1f4;-webkit-text-stroke:0.35px;letter-spacing:0.077px;">session_key</span>
<span class="t" style="left:1382.5px;top:217px;line-height:15px;font-size:10px;color:#e5484d;-webkit-text-stroke:0.35px;">*</span>
<span class="t" style="left:1324.2px;top:244px;line-height:17px;font-size:11.4px;color:#eef1f4;letter-spacing:0.190px;">agent:main:telegram:default:direct:59</span>
<svg style="left:1520.5px;top:241px" width="55" height="22" viewBox="0 0 55 22" shape-rendering="crispEdges"><rect x="0.0" y="0.0" width="3.5" height="3.5" fill="#181d26"/><rect x="0.0" y="3.3" width="3.5" height="3.5" fill="#262c36"/><rect x="3.3" y="3.3" width="3.5" height="3.5" fill="#1f252f"/><rect x="3.3" y="9.9" width="3.5" height="3.5" fill="#181d26"/><rect x="3.3" y="13.2" width="3.5" height="3.5" fill="#151a23"/><rect x="3.3" y="16.5" width="3.5" height="3.5" fill="#151a23"/><rect x="6.6" y="3.3" width="3.5" height="3.5" fill="#04070c"/><rect x="6.6" y="6.6" width="3.5" height="3.5" fill="#0a0e15"/><rect x="6.6" y="9.9" width="3.5" height="3.5" fill="#262c36"/><rect x="6.6" y="13.2" width="3.5" height="3.5" fill="#04070c"/><rect x="9.9" y="0.0" width="3.5" height="3.5" fill="#262c36"/><rect x="9.9" y="3.3" width="3.5" height="3.5" fill="#4b515b"/><rect x="9.9" y="6.6" width="3.5" height="3.5" fill="#4b515b"/><rect x="9.9" y="9.9" width="3.5" height="3.5" fill="#262c36"/><rect x="9.9" y="13.2" width="3.5" height="3.5" fill="#151a23"/><rect x="13.2" y="0.0" width="3.5" height="3.5" fill="#151a23"/><rect x="13.2" y="3.3" width="3.5" height="3.5" fill="#2b313b"/><rect x="13.2" y="9.9" width="3.5" height="3.5" fill="#2b313b"/><rect x="13.2" y="13.2" width="3.5" height="3.5" fill="#4b515b"/><rect x="16.5" y="3.3" width="3.5" height="3.5" fill="#1f252f"/><rect x="16.5" y="9.9" width="3.5" height="3.5" fill="#04070c"/><rect x="19.8" y="3.3" width="3.5" height="3.5" fill="#3a404a"/><rect x="19.8" y="13.2" width="3.5" height="3.5" fill="#1f252f"/><rect x="23.1" y="3.3" width="3.5" height="3.5" fill="#0a0e15"/><rect x="23.1" y="6.6" width="3.5" height="3.5" fill="#0d1118"/><rect x="23.1" y="9.9" width="3.5" height="3.5" fill="#0a0e15"/><rect x="23.1" y="13.2" width="3.5" height="3.5" fill="#151a23"/><rect x="23.1" y="16.5" width="3.5" height="3.5" fill="#4b515b"/><rect x="26.4" y="6.6" width="3.5" height="3.5" fill="#262c36"/><rect x="26.4" y="9.9" width="3.5" height="3.5" fill="#4b515b"/><rect x="26.4" y="13.2" width="3.5" height="3.5" fill="#3a404a"/><rect x="29.7" y="3.3" width="3.5" height="3.5" fill="#1f252f"/><rect x="29.7" y="9.9" width="3.5" height="3.5" fill="#0a0e15"/><rect x="29.7" y="13.2" width="3.5" height="3.5" fill="#181d26"/><rect x="29.7" y="16.5" width="3.5" height="3.5" fill="#1f252f"/><rect x="33.0" y="3.3" width="3.5" height="3.5" fill="#2b313b"/><rect x="33.0" y="6.6" width="3.5" height="3.5" fill="#04070c"/><rect x="33.0" y="13.2" width="3.5" height="3.5" fill="#3a404a"/><rect x="36.3" y="3.3" width="3.5" height="3.5" fill="#0d1118"/><rect x="36.3" y="9.9" width="3.5" height="3.5" fill="#262c36"/><rect x="36.3" y="13.2" width="3.5" height="3.5" fill="#0a0e15"/><rect x="39.6" y="3.3" width="3.5" height="3.5" fill="#4b515b"/><rect x="39.6" y="6.6" width="3.5" height="3.5" fill="#1f252f"/><rect x="39.6" y="13.2" width="3.5" height="3.5" fill="#2b313b"/><rect x="42.9" y="3.3" width="3.5" height="3.5" fill="#4b515b"/><rect x="42.9" y="9.9" width="3.5" height="3.5" fill="#4b515b"/><rect x="42.9" y="13.2" width="3.5" height="3.5" fill="#151a23"/><rect x="42.9" y="16.5" width="3.5" height="3.5" fill="#3a404a"/><rect x="46.2" y="3.3" width="3.5" height="3.5" fill="#3a404a"/><rect x="46.2" y="6.6" width="3.5" height="3.5" fill="#2b313b"/><rect x="46.2" y="9.9" width="3.5" height="3.5" fill="#04070c"/><rect x="46.2" y="13.2" width="3.5" height="3.5" fill="#04070c"/><rect x="49.5" y="0.0" width="3.5" height="3.5" fill="#0d1118"/><rect x="49.5" y="3.3" width="3.5" height="3.5" fill="#262c36"/><rect x="49.5" y="6.6" width="3.5" height="3.5" fill="#3a404a"/><rect x="49.5" y="9.9" width="3.5" height="3.5" fill="#3a404a"/><rect x="49.5" y="16.5" width="3.5" height="3.5" fill="#4b515b"/></svg>
<div class="a" style="left:1302.2px;top:214.2px;width:320.6px;height:68.4px;border:2.500px solid #40a0f3;"></div>
<span class="t" style="left:1314px;top:299px;line-height:16px;font-size:11px;color:#eef1f4;font-weight:700;letter-spacing:0.278px;">Tool-specific Metadata:</span>
<div class="a" style="left:1965.4px;top:297.6px;width:53.2px;height:18.8px;border:1px solid #242d3a;border-radius:4px;"></div>
<span class="t" style="left:1973.2px;top:300px;line-height:14px;font-size:9.6px;color:#eef1f4;-webkit-text-stroke:0.35px;letter-spacing:0.240px;">Add Pair</span>
<span class="t" style="left:1314px;top:322px;line-height:15px;font-size:10px;color:#768090;letter-spacing:0.046px;">No metadata pairs.</span>
<div class="a" style="left:1314px;top:361.4px;width:90px;height:28.8px;background:#1e242f;border-radius:5px;"></div>
<svg style="left:1327px;top:370.2px" width="11.6" height="11.6" viewBox="0 0 24 24" fill="none" stroke="#eef1f4" stroke-width="2.4" stroke-linecap="round" stroke-linejoin="round"><path d="M14.536 21.686a.5.5 0 0 0 .937-.024l6.500-19a.496.496 0 0 0-.635-.635l-19 6.500a.5.5 0 0 0-.024.937l7.930 3.180a2 2 0 0 1 1.112 1.110z"/><path d="m21.854 2.147-10.940 10.939"/></svg>
<span class="t" style="left:1346px;top:368px;line-height:16px;font-size:11px;color:#f2f4f7;-webkit-text-stroke:0.35px;letter-spacing:0.291px;">Run Tool</span>
<div class="a" style="left:1314px;top:403px;width:101.7px;height:29px;background:#1e242f;border-radius:5px;"></div>
<svg style="left:1327px;top:411.8px" width="11.6" height="11.6" viewBox="0 0 24 24" fill="none" stroke="#eef1f4" stroke-width="2.4" stroke-linecap="round" stroke-linejoin="round"><rect width="14" height="14" x="8" y="8" rx="2" ry="2"/><path d="M4 16c-1.100 0-2-.900-2-2V4c0-1.100.900-2 2-2h10c1.100 0 2 .900 2 2"/></svg>
<span class="t" style="left:1346px;top:409px;line-height:16px;font-size:11px;color:#f2f4f7;-webkit-text-stroke:0.35px;letter-spacing:0.442px;">Copy Input</span>
<span class="t" style="left:1314px;top:446px;line-height:18px;font-size:12.6px;color:#f2f4f7;font-weight:700;letter-spacing:-0.159px;">Tool Result:</span>
<span class="t" style="left:1388px;top:446px;line-height:18px;font-size:12.6px;color:#2fa04e;-webkit-text-stroke:0.35px;letter-spacing:0.414px;">Success</span>
<span class="t" style="left:1314px;top:477px;line-height:16px;font-size:11px;color:#f2f4f7;font-weight:700;letter-spacing:0.233px;">Structured Content:</span>
<div class="a" style="left:1314px;top:499.4px;width:704.6px;height:380px;background:#12171f;border-radius:6px;"></div>
<div class="a" style="left:1324.2px;top:509.5px;width:685.2px;height:370px;background:#0f141c;border:1px solid #1e2632;border-radius:4px;"></div>
<svg style="left:1982px;top:524.6px" width="12" height="12" viewBox="0 0 24 24" fill="none" stroke="#dfe3ea" stroke-width="2.4" stroke-linecap="round" stroke-linejoin="round"><rect width="14" height="14" x="8" y="8" rx="2" ry="2"/><path d="M4 16c-1.100 0-2-.900-2-2V4c0-1.100.900-2 2-2h10c1.100 0 2 .900 2 2"/></svg>
<div class="a" style="left:1349.5px;top:540px;width:1px;height:330px;background:#161c26;"></div>
<div class="a" style="left:1370px;top:559px;width:1px;height:311px;background:#161c26;"></div>
<span class="t" style="left:1338px;top:522px;line-height:16px;font-size:11.1px;color:#a4adba;font-family:'Liberation Mono','DejaVu Sans Mono',monospace;letter-spacing:0.048px;">{</span>
<span class="t" style="left:1357.3px;top:542px;line-height:16px;font-size:11.1px;color:#a4adba;font-family:'Liberation Mono','DejaVu Sans Mono',monospace;letter-spacing:0.065px;">conversation:</span>
<span class="t" style="left:1447.1599999999999px;top:542px;line-height:16px;font-size:11.1px;color:#a4adba;font-family:'Liberation Mono','DejaVu Sans Mono',monospace;letter-spacing:0.048px;">{</span>
<span class="t" style="left:1377.2px;top:561px;line-height:16px;font-size:11.1px;color:#a4adba;font-family:'Liberation Mono','DejaVu Sans Mono',monospace;letter-spacing:0.065px;">sessionKey:</span>
<span class="t" style="left:1454.6200000000001px;top:561px;line-height:16px;font-size:11.1px;color:#2c9c4f;font-family:'Liberation Mono','DejaVu Sans Mono',monospace;letter-spacing:0.063px;">"agent:main:telegram:default:direct:59</span>
<span class="t" style="left:1377.2px;top:584px;line-height:16px;font-size:11.1px;color:#a4adba;font-family:'Liberation Mono','DejaVu Sans Mono',monospace;letter-spacing:0.066px;">channel:</span>
<span class="t" style="left:1434.46px;top:584px;line-height:16px;font-size:11.1px;color:#2c9c4f;font-family:'Liberation Mono','DejaVu Sans Mono',monospace;letter-spacing:0.065px;">"telegram"</span>
<span class="t" style="left:1377.2px;top:606px;line-height:16px;font-size:11.1px;color:#a4adba;font-family:'Liberation Mono','DejaVu Sans Mono',monospace;letter-spacing:0.070px;">to:</span>
<span class="t" style="left:1400.8600000000001px;top:606px;line-height:16px;font-size:11.1px;color:#2c9c4f;font-family:'Liberation Mono','DejaVu Sans Mono',monospace;letter-spacing:0.065px;">"telegram:59</span>
<span class="t" style="left:1377.2px;top:629px;line-height:16px;font-size:11.1px;color:#a4adba;font-family:'Liberation Mono','DejaVu Sans Mono',monospace;letter-spacing:0.065px;">accountId:</span>
<span class="t" style="left:1447.9px;top:629px;line-height:16px;font-size:11.1px;color:#2c9c4f;font-family:'Liberation Mono','DejaVu Sans Mono',monospace;letter-spacing:0.066px;">"default"</span>
<span class="t" style="left:1377.2px;top:651px;line-height:16px;font-size:11.1px;color:#a4adba;font-family:'Liberation Mono','DejaVu Sans Mono',monospace;letter-spacing:0.065px;">displayName:</span>
<span class="t" style="left:1461.3400000000001px;top:651px;line-height:16px;font-size:11.1px;color:#2c9c4f;font-family:'Liberation Mono','DejaVu Sans Mono',monospace;letter-spacing:0.065px;">"Gà Con (@</span>
<span class="t" style="left:1377.2px;top:674px;line-height:16px;font-size:11.1px;color:#a4adba;font-family:'Liberation Mono','DejaVu Sans Mono',monospace;letter-spacing:0.065px;">derivedTitle:</span>
<span class="t" style="left:1468.06px;top:674px;line-height:16px;font-size:11.1px;color:#2c9c4f;font-family:'Liberation Mono','DejaVu Sans Mono',monospace;letter-spacing:0.063px;">"Conversation info (untrusted metadata): ```json {…"</span>
<span class="t" style="left:1377.2px;top:696px;line-height:16px;font-size:11.1px;color:#a4adba;font-family:'Liberation Mono','DejaVu Sans Mono',monospace;letter-spacing:0.064px;">lastMessagePreview:</span>
<span class="t" style="left:1508.38px;top:696px;line-height:16px;font-size:11.1px;color:#2c9c4f;font-family:'Liberation Mono','DejaVu Sans Mono',monospace;letter-spacing:0.063px;">"Tùy bạn xuất phát từ đâu nha:</span>
<svg style="left:1709.98px;top:557.5px" width="53" height="22" viewBox="0 0 53 22" shape-rendering="crispEdges"><rect x="3.3" y="0.0" width="3.5" height="3.5" fill="#0d1118"/><rect x="3.3" y="3.3" width="3.5" height="3.5" fill="#1f252f"/><rect x="3.3" y="6.6" width="3.5" height="3.5" fill="#151a23"/><rect x="3.3" y="9.9" width="3.5" height="3.5" fill="#0d1118"/><rect x="6.6" y="0.0" width="3.5" height="3.5" fill="#1f252f"/><rect x="6.6" y="3.3" width="3.5" height="3.5" fill="#1f252f"/><rect x="6.6" y="6.6" width="3.5" height="3.5" fill="#151a23"/><rect x="6.6" y="13.2" width="3.5" height="3.5" fill="#151a23"/><rect x="9.9" y="0.0" width="3.5" height="3.5" fill="#262c36"/><rect x="9.9" y="3.3" width="3.5" height="3.5" fill="#151a23"/><rect x="9.9" y="6.6" width="3.5" height="3.5" fill="#04070c"/><rect x="9.9" y="9.9" width="3.5" height="3.5" fill="#1f252f"/><rect x="9.9" y="16.5" width="3.5" height="3.5" fill="#151a23"/><rect x="13.2" y="0.0" width="3.5" height="3.5" fill="#1f252f"/><rect x="13.2" y="3.3" width="3.5" height="3.5" fill="#1f252f"/><rect x="13.2" y="6.6" width="3.5" height="3.5" fill="#1f252f"/><rect x="13.2" y="16.5" width="3.5" height="3.5" fill="#3a404a"/><rect x="16.5" y="6.6" width="3.5" height="3.5" fill="#3a404a"/><rect x="16.5" y="9.9" width="3.5" height="3.5" fill="#262c36"/><rect x="16.5" y="13.2" width="3.5" height="3.5" fill="#262c36"/><rect x="19.8" y="0.0" width="3.5" height="3.5" fill="#2b313b"/><rect x="19.8" y="3.3" width="3.5" height="3.5" fill="#2b313b"/><rect x="19.8" y="6.6" width="3.5" height="3.5" fill="#3a404a"/><rect x="19.8" y="9.9" width="3.5" height="3.5" fill="#0d1118"/><rect x="19.8" y="13.2" width="3.5" height="3.5" fill="#04070c"/><rect x="19.8" y="16.5" width="3.5" height="3.5" fill="#04070c"/><rect x="23.1" y="3.3" width="3.5" height="3.5" fill="#4b515b"/><rect x="23.1" y="6.6" width="3.5" height="3.5" fill="#4b515b"/><rect x="23.1" y="9.9" width="3.5" height="3.5" fill="#262c36"/><rect x="26.4" y="3.3" width="3.5" height="3.5" fill="#1f252f"/><rect x="26.4" y="6.6" width="3.5" height="3.5" fill="#1f252f"/><rect x="26.4" y="16.5" width="3.5" height="3.5" fill="#3a404a"/><rect x="29.7" y="3.3" width="3.5" height="3.5" fill="#0d1118"/><rect x="29.7" y="6.6" width="3.5" height="3.5" fill="#3a404a"/><rect x="29.7" y="13.2" width="3.5" height="3.5" fill="#0a0e15"/><rect x="29.7" y="16.5" width="3.5" height="3.5" fill="#181d26"/><rect x="33.0" y="6.6" width="3.5" height="3.5" fill="#181d26"/><rect x="33.0" y="9.9" width="3.5" height="3.5" fill="#3a404a"/><rect x="33.0" y="13.2" width="3.5" height="3.5" fill="#0a0e15"/><rect x="36.3" y="3.3" width="3.5" height="3.5" fill="#0d1118"/><rect x="36.3" y="6.6" width="3.5" height="3.5" fill="#04070c"/><rect x="36.3" y="9.9" width="3.5" height="3.5" fill="#262c36"/><rect x="36.3" y="13.2" width="3.5" height="3.5" fill="#4b515b"/><rect x="36.3" y="16.5" width="3.5" height="3.5" fill="#262c36"/><rect x="39.6" y="0.0" width="3.5" height="3.5" fill="#2b313b"/><rect x="39.6" y="3.3" width="3.5" height="3.5" fill="#4b515b"/><rect x="39.6" y="6.6" width="3.5" height="3.5" fill="#04070c"/><rect x="39.6" y="13.2" width="3.5" height="3.5" fill="#1f252f"/><rect x="39.6" y="16.5" width="3.5" height="3.5" fill="#262c36"/><rect x="42.9" y="3.3" width="3.5" height="3.5" fill="#4b515b"/><rect x="42.9" y="6.6" width="3.5" height="3.5" fill="#4b515b"/><rect x="42.9" y="9.9" width="3.5" height="3.5" fill="#04070c"/><rect x="42.9" y="16.5" width="3.5" height="3.5" fill="#0d1118"/><rect x="46.2" y="3.3" width="3.5" height="3.5" fill="#151a23"/><rect x="46.2" y="9.9" width="3.5" height="3.5" fill="#0d1118"/><rect x="46.2" y="13.2" width="3.5" height="3.5" fill="#3a404a"/><rect x="49.5" y="0.0" width="3.5" height="3.5" fill="#4b515b"/><rect x="49.5" y="6.6" width="3.5" height="3.5" fill="#181d26"/></svg>
<span class="t" style="left:1764.48px;top:561px;line-height:16px;font-size:11.1px;color:#2c9c4f;font-family:'Liberation Mono','DejaVu Sans Mono',monospace;letter-spacing:0.048px;">"</span>
<svg style="left:1482.5000000000002px;top:603px" width="53" height="21" viewBox="0 0 53 21" shape-rendering="crispEdges"><rect x="0.0" y="0.0" width="3.5" height="3.5" fill="#151a23"/><rect x="0.0" y="6.6" width="3.5" height="3.5" fill="#181d26"/><rect x="0.0" y="9.9" width="3.5" height="3.5" fill="#262c36"/><rect x="0.0" y="13.2" width="3.5" height="3.5" fill="#181d26"/><rect x="0.0" y="16.5" width="3.5" height="3.5" fill="#0a0e15"/><rect x="3.3" y="3.3" width="3.5" height="3.5" fill="#0a0e15"/><rect x="3.3" y="6.6" width="3.5" height="3.5" fill="#04070c"/><rect x="3.3" y="13.2" width="3.5" height="3.5" fill="#1f252f"/><rect x="6.6" y="3.3" width="3.5" height="3.5" fill="#262c36"/><rect x="6.6" y="6.6" width="3.5" height="3.5" fill="#1f252f"/><rect x="6.6" y="9.9" width="3.5" height="3.5" fill="#151a23"/><rect x="6.6" y="13.2" width="3.5" height="3.5" fill="#151a23"/><rect x="9.9" y="3.3" width="3.5" height="3.5" fill="#151a23"/><rect x="9.9" y="6.6" width="3.5" height="3.5" fill="#262c36"/><rect x="9.9" y="9.9" width="3.5" height="3.5" fill="#3a404a"/><rect x="9.9" y="13.2" width="3.5" height="3.5" fill="#0a0e15"/><rect x="13.2" y="3.3" width="3.5" height="3.5" fill="#181d26"/><rect x="13.2" y="6.6" width="3.5" height="3.5" fill="#3a404a"/><rect x="13.2" y="9.9" width="3.5" height="3.5" fill="#0d1118"/><rect x="13.2" y="13.2" width="3.5" height="3.5" fill="#1f252f"/><rect x="16.5" y="3.3" width="3.5" height="3.5" fill="#262c36"/><rect x="16.5" y="6.6" width="3.5" height="3.5" fill="#0d1118"/><rect x="16.5" y="13.2" width="3.5" height="3.5" fill="#2b313b"/><rect x="19.8" y="0.0" width="3.5" height="3.5" fill="#181d26"/><rect x="19.8" y="3.3" width="3.5" height="3.5" fill="#3a404a"/><rect x="19.8" y="6.6" width="3.5" height="3.5" fill="#0d1118"/><rect x="19.8" y="9.9" width="3.5" height="3.5" fill="#0a0e15"/><rect x="19.8" y="13.2" width="3.5" height="3.5" fill="#262c36"/><rect x="23.1" y="3.3" width="3.5" height="3.5" fill="#3a404a"/><rect x="23.1" y="6.6" width="3.5" height="3.5" fill="#262c36"/><rect x="23.1" y="9.9" width="3.5" height="3.5" fill="#0a0e15"/><rect x="26.4" y="3.3" width="3.5" height="3.5" fill="#04070c"/><rect x="26.4" y="6.6" width="3.5" height="3.5" fill="#2b313b"/><rect x="26.4" y="9.9" width="3.5" height="3.5" fill="#0d1118"/><rect x="26.4" y="13.2" width="3.5" height="3.5" fill="#4b515b"/><rect x="29.7" y="0.0" width="3.5" height="3.5" fill="#0d1118"/><rect x="29.7" y="3.3" width="3.5" height="3.5" fill="#262c36"/><rect x="29.7" y="6.6" width="3.5" height="3.5" fill="#04070c"/><rect x="29.7" y="9.9" width="3.5" height="3.5" fill="#2b313b"/><rect x="29.7" y="13.2" width="3.5" height="3.5" fill="#1f252f"/><rect x="33.0" y="3.3" width="3.5" height="3.5" fill="#151a23"/><rect x="33.0" y="6.6" width="3.5" height="3.5" fill="#181d26"/><rect x="33.0" y="9.9" width="3.5" height="3.5" fill="#151a23"/><rect x="36.3" y="0.0" width="3.5" height="3.5" fill="#4b515b"/><rect x="36.3" y="6.6" width="3.5" height="3.5" fill="#4b515b"/><rect x="36.3" y="13.2" width="3.5" height="3.5" fill="#151a23"/><rect x="36.3" y="16.5" width="3.5" height="3.5" fill="#1f252f"/><rect x="39.6" y="0.0" width="3.5" height="3.5" fill="#262c36"/><rect x="39.6" y="3.3" width="3.5" height="3.5" fill="#2b313b"/><rect x="39.6" y="6.6" width="3.5" height="3.5" fill="#4b515b"/><rect x="39.6" y="9.9" width="3.5" height="3.5" fill="#262c36"/><rect x="39.6" y="13.2" width="3.5" height="3.5" fill="#151a23"/><rect x="42.9" y="3.3" width="3.5" height="3.5" fill="#04070c"/><rect x="42.9" y="6.6" width="3.5" height="3.5" fill="#181d26"/><rect x="42.9" y="9.9" width="3.5" height="3.5" fill="#4b515b"/><rect x="42.9" y="13.2" width="3.5" height="3.5" fill="#0d1118"/><rect x="46.2" y="0.0" width="3.5" height="3.5" fill="#0a0e15"/><rect x="46.2" y="6.6" width="3.5" height="3.5" fill="#0a0e15"/><rect x="46.2" y="9.9" width="3.5" height="3.5" fill="#04070c"/><rect x="46.2" y="13.2" width="3.5" height="3.5" fill="#262c36"/><rect x="46.2" y="16.5" width="3.5" height="3.5" fill="#0a0e15"/><rect x="49.5" y="6.6" width="3.5" height="3.5" fill="#1f252f"/><rect x="49.5" y="13.2" width="3.5" height="3.5" fill="#2b313b"/></svg>
<span class="t" style="left:1536.0000000000002px;top:606px;line-height:16px;font-size:11.1px;color:#2c9c4f;font-family:'Liberation Mono','DejaVu Sans Mono',monospace;letter-spacing:0.048px;">"</span>
<svg style="left:1529.5400000000002px;top:649px" width="38" height="17" viewBox="0 0 38 17" shape-rendering="crispEdges"><rect x="0.0" y="6.6" width="3.5" height="3.5" fill="#04070c"/><rect x="0.0" y="9.9" width="3.5" height="3.5" fill="#0d1118"/><rect x="3.3" y="0.0" width="3.5" height="3.5" fill="#181d26"/><rect x="3.3" y="6.6" width="3.5" height="3.5" fill="#4b515b"/><rect x="3.3" y="9.9" width="3.5" height="3.5" fill="#0d1118"/><rect x="6.6" y="3.3" width="3.5" height="3.5" fill="#04070c"/><rect x="6.6" y="6.6" width="3.5" height="3.5" fill="#181d26"/><rect x="9.9" y="0.0" width="3.5" height="3.5" fill="#4b515b"/><rect x="9.9" y="3.3" width="3.5" height="3.5" fill="#0a0e15"/><rect x="9.9" y="9.9" width="3.5" height="3.5" fill="#1f252f"/><rect x="13.2" y="3.3" width="3.5" height="3.5" fill="#2b313b"/><rect x="13.2" y="9.9" width="3.5" height="3.5" fill="#3a404a"/><rect x="16.5" y="0.0" width="3.5" height="3.5" fill="#04070c"/><rect x="16.5" y="6.6" width="3.5" height="3.5" fill="#4b515b"/><rect x="16.5" y="13.2" width="3.5" height="3.5" fill="#1f252f"/><rect x="19.8" y="6.6" width="3.5" height="3.5" fill="#262c36"/><rect x="19.8" y="9.9" width="3.5" height="3.5" fill="#262c36"/><rect x="19.8" y="13.2" width="3.5" height="3.5" fill="#1f252f"/><rect x="23.1" y="0.0" width="3.5" height="3.5" fill="#0a0e15"/><rect x="23.1" y="3.3" width="3.5" height="3.5" fill="#04070c"/><rect x="23.1" y="6.6" width="3.5" height="3.5" fill="#262c36"/><rect x="23.1" y="9.9" width="3.5" height="3.5" fill="#1f252f"/><rect x="26.4" y="3.3" width="3.5" height="3.5" fill="#0a0e15"/><rect x="26.4" y="6.6" width="3.5" height="3.5" fill="#151a23"/><rect x="26.4" y="9.9" width="3.5" height="3.5" fill="#262c36"/><rect x="29.7" y="0.0" width="3.5" height="3.5" fill="#2b313b"/><rect x="29.7" y="3.3" width="3.5" height="3.5" fill="#262c36"/><rect x="29.7" y="9.9" width="3.5" height="3.5" fill="#262c36"/><rect x="33.0" y="0.0" width="3.5" height="3.5" fill="#4b515b"/><rect x="33.0" y="6.6" width="3.5" height="3.5" fill="#262c36"/></svg>
<span class="t" style="left:1569.5400000000002px;top:651px;line-height:16px;font-size:11.1px;color:#2c9c4f;font-family:'Liberation Mono','DejaVu Sans Mono',monospace;letter-spacing:0.066px;">) id:59</span>
<svg style="left:1616.5800000000002px;top:646px" width="55" height="26" viewBox="0 0 55 26" shape-rendering="crispEdges"><rect x="0.0" y="19.8" width="3.5" height="3.5" fill="#181d26"/><rect x="3.3" y="3.3" width="3.5" height="3.5" fill="#151a23"/><rect x="3.3" y="6.6" width="3.5" height="3.5" fill="#2b313b"/><rect x="3.3" y="9.9" width="3.5" height="3.5" fill="#181d26"/><rect x="3.3" y="16.5" width="3.5" height="3.5" fill="#04070c"/><rect x="6.6" y="3.3" width="3.5" height="3.5" fill="#262c36"/><rect x="6.6" y="6.6" width="3.5" height="3.5" fill="#262c36"/><rect x="6.6" y="9.9" width="3.5" height="3.5" fill="#181d26"/><rect x="6.6" y="13.2" width="3.5" height="3.5" fill="#04070c"/><rect x="6.6" y="16.5" width="3.5" height="3.5" fill="#1f252f"/><rect x="9.9" y="3.3" width="3.5" height="3.5" fill="#262c36"/><rect x="9.9" y="9.9" width="3.5" height="3.5" fill="#2b313b"/><rect x="9.9" y="13.2" width="3.5" height="3.5" fill="#0a0e15"/><rect x="9.9" y="16.5" width="3.5" height="3.5" fill="#2b313b"/><rect x="13.2" y="6.6" width="3.5" height="3.5" fill="#2b313b"/><rect x="13.2" y="9.9" width="3.5" height="3.5" fill="#1f252f"/><rect x="13.2" y="13.2" width="3.5" height="3.5" fill="#04070c"/><rect x="13.2" y="16.5" width="3.5" height="3.5" fill="#0a0e15"/><rect x="16.5" y="3.3" width="3.5" height="3.5" fill="#04070c"/><rect x="16.5" y="9.9" width="3.5" height="3.5" fill="#1f252f"/><rect x="16.5" y="16.5" width="3.5" height="3.5" fill="#4b515b"/><rect x="19.8" y="3.3" width="3.5" height="3.5" fill="#1f252f"/><rect x="19.8" y="6.6" width="3.5" height="3.5" fill="#2b313b"/><rect x="19.8" y="9.9" width="3.5" height="3.5" fill="#2b313b"/><rect x="19.8" y="13.2" width="3.5" height="3.5" fill="#4b515b"/><rect x="19.8" y="16.5" width="3.5" height="3.5" fill="#0a0e15"/><rect x="19.8" y="19.8" width="3.5" height="3.5" fill="#0a0e15"/><rect x="23.1" y="0.0" width="3.5" height="3.5" fill="#0d1118"/><rect x="23.1" y="3.3" width="3.5" height="3.5" fill="#151a23"/><rect x="23.1" y="6.6" width="3.5" height="3.5" fill="#1f252f"/><rect x="23.1" y="9.9" width="3.5" height="3.5" fill="#1f252f"/><rect x="23.1" y="16.5" width="3.5" height="3.5" fill="#4b515b"/><rect x="26.4" y="0.0" width="3.5" height="3.5" fill="#4b515b"/><rect x="26.4" y="6.6" width="3.5" height="3.5" fill="#262c36"/><rect x="26.4" y="9.9" width="3.5" height="3.5" fill="#04070c"/><rect x="26.4" y="13.2" width="3.5" height="3.5" fill="#4b515b"/><rect x="29.7" y="3.3" width="3.5" height="3.5" fill="#151a23"/><rect x="29.7" y="6.6" width="3.5" height="3.5" fill="#2b313b"/><rect x="29.7" y="9.9" width="3.5" height="3.5" fill="#262c36"/><rect x="29.7" y="13.2" width="3.5" height="3.5" fill="#2b313b"/><rect x="29.7" y="16.5" width="3.5" height="3.5" fill="#0a0e15"/><rect x="29.7" y="19.8" width="3.5" height="3.5" fill="#262c36"/><rect x="33.0" y="3.3" width="3.5" height="3.5" fill="#3a404a"/><rect x="33.0" y="6.6" width="3.5" height="3.5" fill="#0d1118"/><rect x="33.0" y="9.9" width="3.5" height="3.5" fill="#262c36"/><rect x="33.0" y="13.2" width="3.5" height="3.5" fill="#262c36"/><rect x="33.0" y="16.5" width="3.5" height="3.5" fill="#4b515b"/><rect x="33.0" y="19.8" width="3.5" height="3.5" fill="#151a23"/><rect x="36.3" y="0.0" width="3.5" height="3.5" fill="#1f252f"/><rect x="36.3" y="6.6" width="3.5" height="3.5" fill="#1f252f"/><rect x="36.3" y="9.9" width="3.5" height="3.5" fill="#181d26"/><rect x="36.3" y="13.2" width="3.5" height="3.5" fill="#4b515b"/><rect x="39.6" y="3.3" width="3.5" height="3.5" fill="#04070c"/><rect x="39.6" y="6.6" width="3.5" height="3.5" fill="#2b313b"/><rect x="39.6" y="9.9" width="3.5" height="3.5" fill="#4b515b"/><rect x="39.6" y="13.2" width="3.5" height="3.5" fill="#262c36"/><rect x="39.6" y="16.5" width="3.5" height="3.5" fill="#181d26"/><rect x="39.6" y="19.8" width="3.5" height="3.5" fill="#0a0e15"/><rect x="42.9" y="0.0" width="3.5" height="3.5" fill="#0d1118"/><rect x="42.9" y="3.3" width="3.5" height="3.5" fill="#262c36"/><rect x="42.9" y="6.6" width="3.5" height="3.5" fill="#2b313b"/><rect x="42.9" y="9.9" width="3.5" height="3.5" fill="#1f252f"/><rect x="42.9" y="13.2" width="3.5" height="3.5" fill="#0a0e15"/><rect x="42.9" y="16.5" width="3.5" height="3.5" fill="#0d1118"/><rect x="42.9" y="19.8" width="3.5" height="3.5" fill="#04070c"/><rect x="46.2" y="0.0" width="3.5" height="3.5" fill="#3a404a"/><rect x="46.2" y="3.3" width="3.5" height="3.5" fill="#151a23"/><rect x="46.2" y="6.6" width="3.5" height="3.5" fill="#151a23"/><rect x="46.2" y="16.5" width="3.5" height="3.5" fill="#181d26"/><rect x="49.5" y="0.0" width="3.5" height="3.5" fill="#04070c"/><rect x="49.5" y="13.2" width="3.5" height="3.5" fill="#04070c"/><rect x="49.5" y="16.5" width="3.5" height="3.5" fill="#0a0e15"/></svg>
<span class="t" style="left:1672.5800000000002px;top:651px;line-height:16px;font-size:11.1px;color:#2c9c4f;font-family:'Liberation Mono','DejaVu Sans Mono',monospace;letter-spacing:0.048px;">"</span>
<span class="t" style="left:1508.5px;top:728px;line-height:16px;font-size:11.1px;color:#2c9c4f;font-family:'Liberation Mono','DejaVu Sans Mono',monospace;letter-spacing:0.063px;">**Từ HCM (Phương Trang, Thành Bưởi, etc.)**</span>
<span class="t" style="left:1508.5px;top:744px;line-height:16px;font-size:11.1px;color:#2c9c4f;font-family:'Liberation Mono','DejaVu Sans Mono',monospace;letter-spacing:0.063px;">- Xe giường nằm: ~6-7 tiếng (khoảng 300km qua đèo Bảo Lộc hoặc đèo P</span>
<span class="t" style="left:1508.5px;top:760px;line-height:16px;font-size:11.1px;color:#2c9c4f;font-family:'Liberation Mono','DejaVu Sans Mono',monospace;letter-spacing:0.067px;">renn)</span>
<span class="t" style="left:1508.5px;top:776px;line-height:16px;font-size:11.1px;color:#2c9c4f;font-family:'Liberation Mono','DejaVu Sans Mono',monospace;letter-spacing:0.063px;">- Nếu đi xe máy: ~8-10 tiếng, chia làm 2 ngày cho chill</span>
<span class="t" style="left:1508.5px;top:808px;line-height:16px;font-size:11.1px;color:#2c9c4f;font-family:'Liberation Mono','DejaVu Sans Mono',monospace;letter-spacing:0.064px;">**Từ Nha Trang**</span>
<span class="t" style="left:1508.5px;top:824px;line-height:16px;font-size:11.1px;color:#2c9c4f;font-family:'Liberation Mono','DejaVu Sans Mono',monospace;letter-spacing:0.063px;">- ~3-4 tiếng, đường Khánh Vinh - đèo Khánh Lê đẹp nhưng khá "hăm dọ</span>
<span class="t" style="left:1508.5px;top:840px;line-height:16px;font-size:11.1px;color:#2c9c4f;font-family:'Liberation Mono','DejaVu Sans Mono',monospace;letter-spacing:0.075px;">a"</span>
<span class="t" style="left:1528.5px;top:838px;line-height:18px;font-size:12px;color:#e8b43a;">😅</span>
<svg style="left:0;top:0" width="2048" height="869" viewBox="0 0 2048 869"><path d="M1115.5 576.5L790.2 113.1" stroke="#40a0f3" stroke-width="2.300" fill="none"/><path d="M781 100L796.3 111.3L786.4 118.2Z" fill="#40a0f3"/><path d="M1115.5 576.5L726.7 333.7" stroke="#40a0f3" stroke-width="2.300" fill="none"/><path d="M713.1 325.2L731.5 329.6L725.2 339.8Z" fill="#40a0f3"/><path d="M1115.5 576.5L1287.8 389.8" stroke="#40a0f3" stroke-width="2.300" fill="none"/><path d="M1298.7 378L1290.9 395.3L1282.1 387.2Z" fill="#40a0f3"/></svg>
<span class="t" style="left:1019.5px;top:391px;line-height:23px;font-size:16.5px;color:#40a0f3;letter-spacing:-0.069px;-webkit-text-stroke:0.4px #40a0f3;">(1)</span>
<span class="t" style="left:872.5px;top:401px;line-height:23px;font-size:16.5px;color:#40a0f3;letter-spacing:0.131px;-webkit-text-stroke:0.4px #40a0f3;">(2)</span>
<span class="t" style="left:1148px;top:476px;line-height:23px;font-size:16.5px;color:#40a0f3;letter-spacing:0.131px;-webkit-text-stroke:0.4px #40a0f3;">(3)</span>
<div class="a" style="left:537px;top:0px;width:1.3px;height:869px;background:#2a323e;"></div>
<div class="a" style="left:538.3px;top:38px;width:2.7px;height:831px;background:#0c111a;"></div>
<div class="a" style="left:541px;top:38px;width:0.8px;height:831px;background:#161d29;"></div>
<div class="a" style="left:2045px;top:38px;width:3px;height:831px;background:#1d2528;"></div>
<div class="a" style="left:538px;top:857px;width:1507px;height:12px;background:#151a23;"></div>
<div class="a" style="left:1290.5px;top:859.5px;width:7.5px;height:12px;background:#6a6f78;border-radius:3px;"></div>
<div class="a" style="left:538px;top:0px;width:1510px;height:38px;background:#49332a;"></div>
<div class="a" style="left:538px;top:0px;width:1510px;height:1px;background:#38261d;"></div>
<div class="a" style="left:538px;top:37px;width:1510px;height:1px;background:#3a2a24;"></div>
<div class="a" style="left:538px;top:5.500px;width:1452px;height:27.500px;border-radius:0 14px 14px 0;background:#2f1e13"></div>
<span class="t" style="left:538.8px;top:11px;line-height:16px;font-size:11px;color:#ddd5cd;letter-spacing:0.534px;">ROXY_AUTH_TOKEN=f2dec568c960e4c57e31b0778f379af7dcafb6516e25db53cefbafb7cb20fed4#tools</span>
<svg style="left:1964.500px;top:12.500px" width="13" height="13" viewBox="0 0 24 24" fill="none" stroke="#e6dcd3" stroke-width="2.200" stroke-linejoin="round"><path d="M12 2.500l2.950 6.250 6.800.850-5 4.700 1.300 6.750L12 17.700l-6.050 3.350 1.300-6.750-5-4.700 6.800-.850z"/></svg>
<div class="a" style="left:2003px;top:11.300px;width:16.200px;height:16.200px;border-radius:50%;background:#7a4fb0"></div>
<span class="t" style="left:2008.6px;top:15px;line-height:10px;font-size:6.5px;color:#e8def5;">V</span>
<div class="a" style="left:2039.200px;top:13.8px;width:2px;height:2px;border-radius:50%;background:#85756a"></div>
<div class="a" style="left:2039.200px;top:18.2px;width:2px;height:2px;border-radius:50%;background:#85756a"></div>
<div class="a" style="left:2039.200px;top:22.6px;width:2px;height:2px;border-radius:50%;background:#85756a"></div>
</body></html>
